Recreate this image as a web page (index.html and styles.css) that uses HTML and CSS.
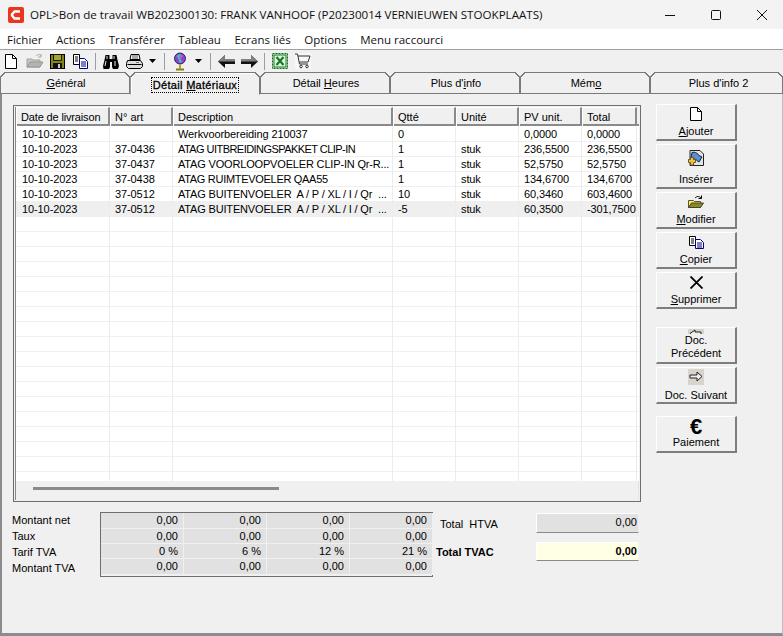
FILE: index.html
```html
<!DOCTYPE html>
<html lang="fr">
<head>
<meta charset="utf-8">
<title>OPL</title>
<link rel="stylesheet" href="styles.css">
</head>
<body>
<div class="window">
  <header class="titlebar">
    <svg class="logo" width="16" height="16" viewBox="0 0 16 16"><rect width="16" height="16" rx="2" fill="#e8361f"/><path d="M12 4.500H6.500L4 7.500v1L6.500 11.500H12" fill="none" stroke="#fff" stroke-width="2.400"/></svg>
    <span class="title">OPL&gt;Bon de travail WB202300130: FRANK VANHOOF (P20230014 VERNIEUWEN STOOKPLAATS)</span>
    <div class="winbtns">
      <svg width="10" height="10" viewBox="0 0 10 10"><path d="M0 5.500h10" stroke="#111" fill="none"/></svg>
      <svg width="10" height="10" viewBox="0 0 10 10"><rect x=".5" y=".5" width="9" height="9" rx="1" stroke="#111" fill="none"/></svg>
      <svg width="10" height="10" viewBox="0 0 10 10"><path d="M0 0l10 10M10 0L0 10" stroke="#111" fill="none"/></svg>
    </div>
  </header>
  <nav class="menubar">
    <span>Fichier</span><span>Actions</span><span>Transférer</span><span>Tableau</span><span>Ecrans liés</span><span>Options</span><span>Menu raccourci</span>
  </nav>
  <div class="toolbar">
    <svg class="t" width="12" height="15" viewBox="0 0 12 15"><path d="M.5.500h7l4 4v10H.5z" fill="#fff" stroke="#000"/><path d="M7.500.500v4h4" fill="none" stroke="#000"/></svg>
    <svg class="t t-open" width="18" height="16" viewBox="0 0 18 16"><path d="M1 6h5l1 1h7v7H1z" fill="#c8c8c4" stroke="#a0a09c"/><path d="M1 14l3-5h13l-3 5z" fill="#b4b4b0" stroke="#98988f"/><path d="M10 3c2-2 4-2 5 0M15 1v3h-3" fill="none" stroke="#a8a8a4"/></svg>
    <svg class="t t-save" width="15" height="15" viewBox="0 0 15 15"><rect x=".5" y=".5" width="14" height="14" fill="#84841a" stroke="#000"/><rect x="3.500" y=".5" width="8" height="6" fill="#a4a430" stroke="#000" stroke-width=".8"/><rect x="3" y="9" width="9" height="6" fill="#111"/><rect x="8" y="10" width="2" height="4" fill="#ccc"/></svg>
    <svg class="t t-copy" width="15" height="15" viewBox="0 0 15 15"><path d="M.5.500h6v10h-6z" fill="#fff" stroke="#000"/><path d="M2 3h3M2 5h3M2 7h3" stroke="#000"/><path d="M6.500 4.500h5l3 3v7h-8z" fill="#fff" stroke="#00007c"/><path d="M8 8h5M8 10h5M8 12h5" stroke="#00007c"/></svg>
    <i class="sep sep-a"></i>
    <svg class="t t-find" width="16" height="15" viewBox="0 0 16 15"><path d="M2.500 1h4v4h3V1h4l1 5 1.500 6-1 3H10L9 13V8H7v5l-1 2H.5l-.5-3 1.500-6z" fill="#000"/><path d="M3 7l-1 5M12 7v5M4 2v3M11 2v3" stroke="#fff" stroke-width=".9"/></svg>
    <svg class="t t-print" width="17" height="15" viewBox="0 0 17 15"><path d="M5 .5h8l1 5H4z" fill="#fff" stroke="#000"/><path d="M6 2h6M6 4h6" stroke="#555"/><path d="M1.500 6.500h13l2 3v3l-2 2h-12l-2-2v-3z" fill="#ddd" stroke="#000"/><path d="M1.500 10.500h14" stroke="#000"/><path d="M10 8.500h3" stroke="#777"/></svg>
    <svg class="t t-drop" width="7" height="4" viewBox="0 0 7 4"><path d="M0 0h7L3.500 4z" fill="#000"/></svg>
    <i class="sep sep-b"></i>
    <svg class="t t-globe" width="12" height="19" viewBox="0 0 12 19"><circle cx="6" cy="6.500" r="5.500" fill="#9c3cc8" stroke="#26266a"/><path d="M2.500 4l3-2 3 2-2 3 2 3-3 1-1-4z" fill="#38c0c8"/><path d="M5 4l3 1-1 3z" fill="#e040a0"/><path d="M6 12.500v4" stroke="#b8a010" stroke-width="2"/><path d="M2 17.500h8" stroke="#8a7a08" stroke-width="2"/></svg>
    <svg class="t t-drop2" width="7" height="4" viewBox="0 0 7 4"><path d="M0 0h7L3.500 4z" fill="#000"/></svg>
    <i class="sep sep-c"></i>
    <svg class="t t-left" width="17" height="13" viewBox="0 0 17 13"><path d="M7 0L0 6.500 7 13V9h10V4H7z" fill="#111"/><path d="M7 0L0 6.500h17V4H7z" fill="#808080"/></svg>
    <svg class="t t-right" width="17" height="13" viewBox="0 0 17 13"><path d="M10 0l7 6.500L10 13V9H0V4h10z" fill="#111"/><path d="M10 0l7 6.500H0V4h10z" fill="#808080"/></svg>
    <i class="sep sep-d"></i>
    <svg class="t t-xl" width="16" height="16" viewBox="0 0 16 16"><rect x=".5" y=".5" width="15" height="15" fill="#d8ecd4" stroke="#0c6b18" stroke-dasharray="2 1"/><rect x="2" y="2" width="12" height="12" fill="#e6f2e2" stroke="#157a22"/><path d="M4.500 4l7 8M11.500 4l-7 8" stroke="#157a22" stroke-width="2.200"/></svg>
    <svg class="t t-cart" width="16" height="16" viewBox="0 0 16 16"><rect width="16" height="16" fill="#f8f8f8"/><path d="M0 1h2.500l2 10h8.500M3 3h12l-2 6H4.500" fill="none" stroke="#333"/><circle cx="6" cy="13.500" r="1.300" fill="none" stroke="#333"/><circle cx="12" cy="13.500" r="1.300" fill="none" stroke="#333"/></svg>
  </div>
  <div class="tabs">
    <div class="tab"><span><u>G</u>énéral</span></div>
    <div class="tab active"><span class="focus">Détail <u>M</u>atériaux</span></div>
    <div class="tab"><span>Détail <u>H</u>eures</span></div>
    <div class="tab"><span>Plus d'<u>i</u>nfo</span></div>
    <div class="tab"><span>Mém<u>o</u></span></div>
    <div class="tab last"><span>Plus d'info 2</span></div>
  </div>
  <main class="panel">
    <div class="body-row">
      <section class="grid-frame">
        <div class="grid">
          <div class="row head">
            <div class="tight-h">Date de livraison</div><div>N° art</div><div>Description</div><div>Qtté</div><div>Unité</div><div>PV unit.</div><div>Total</div>
          </div>
          <div class="rows">
            <div class="row"><div>10-10-2023</div><div></div><div>Werkvoorbereiding 210037</div><div>0</div><div></div><div>0,0000</div><div>0,0000</div></div>
            <div class="row"><div>10-10-2023</div><div>37-0436</div><div class="s1">ATAG UITBREIDINGSPAKKET CLIP-IN</div><div>1</div><div>stuk</div><div>236,5500</div><div>236,5500</div></div>
            <div class="row"><div>10-10-2023</div><div>37-0437</div><div class="s3">ATAG VOORLOOPVOELER CLIP-IN Qr-R...</div><div>1</div><div>stuk</div><div>52,5750</div><div>52,5750</div></div>
            <div class="row"><div>10-10-2023</div><div>37-0438</div><div class="s2">ATAG RUIMTEVOELER QAA55</div><div>1</div><div>stuk</div><div>134,6700</div><div>134,6700</div></div>
            <div class="row"><div>10-10-2023</div><div>37-0512</div><div class="pre s3">ATAG BUITENVOELER  A / P / XL / I / Qr  ...</div><div>10</div><div>stuk</div><div>60,3460</div><div>603,4600</div></div>
            <div class="row sel"><div>10-10-2023</div><div>37-0512</div><div class="pre s3">ATAG BUITENVOELER  A / P / XL / I / Qr  ...</div><div>-5</div><div>stuk</div><div>60,3500</div><div>-301,7500</div></div>
            <div class="row blank"><div></div><div></div><div></div><div></div><div></div><div></div><div></div></div>
          </div>
          <div class="scrollzone"><div class="thumb"></div></div>
        </div>
      </section>
      <aside class="actions">
        <button class="btn b37"><svg width="12" height="14" viewBox="0 0 12 14"><path d="M.5.500h7l4 4v9H.5z" fill="#fff" stroke="#000"/><path d="M7.500.500v4h4" fill="none" stroke="#000"/></svg><span><u>A</u>jouter</span></button>
        <button class="btn b46"><svg class="ins" width="16" height="16" viewBox="0 0 16 16"><path d="M2 .5h10l3.500 3.500v11.500H2z" fill="#e4e4e4" stroke="#222"/><path d="M4 2.500c3-1 6 1 7 3l3 1.500-3 5c-2-1-3-3-5-3l-3-1z" fill="#5b8fd0" stroke="#123"/><path d="M3 9.500h2V7.500h3v2h2v3H8v2.500H5V12.500H3z" transform="translate(-2.500 0)" fill="#f4c430" stroke="#654"/></svg><span class="pad-t">Insérer</span></button>
        <button class="btn b37"><svg width="16" height="14" viewBox="0 0 16 14"><path d="M.5 5.500h5l1 1h6v6h-12z" fill="#ffe860" stroke="#554"/><path d="M.5 12.500l3-4.500h12l-3 4.500z" fill="#8a8a1e" stroke="#443"/><path d="M7 3c2-2 4-2 6 0M13.500 .5v3h-3" fill="none" stroke="#000"/></svg><span><u>M</u>odifier</span></button>
        <button class="btn b37"><svg class="top3" width="15" height="13" viewBox="0 0 15 13"><path d="M.5.500h6v9h-6z" fill="#fff" stroke="#000"/><path d="M2 3h3M2 5h3M2 7h3" stroke="#000"/><path d="M6.500 3.500h5l3 3v6h-8z" fill="#fff" stroke="#00007c"/><path d="M8 7h5M8 9h5M8 11h5" stroke="#00007c"/></svg><span><u>C</u>opier</span></button>
        <button class="btn b37"><svg class="top3" width="13" height="13" viewBox="0 0 13 13"><path d="M.5.500l12 12M12.500.500l-12 12" stroke="#000" stroke-width="1.800"/></svg><span><u>S</u>upprimer</span></button>
        <button class="btn b37 gap-l tight"><svg class="chip" width="16" height="16" viewBox="0 0 16 16"><rect width="16" height="16" fill="#d8d4cc"/><path d="M7 1L2 4.500 7 8V6h6V3H7z" fill="#eee" stroke="#222"/></svg><span class="over">Doc.<br>Précédent</span></button>
        <button class="btn b37"><svg class="chip" width="16" height="16" viewBox="0 0 16 16"><rect width="16" height="16" fill="#d8d4cc"/><path d="M9 3l5 4.500L9 12V9H2V6h7z" fill="#eee" stroke="#222"/></svg><span>Doc. Suivant</span></button>
        <button class="btn b37 gap-m"><span class="euro">€</span><span>Paiement</span></button>
      </aside>
    </div>
    <div class="totals">
      <div class="labels"><span>Montant net</span><span>Taux</span><span>Tarif TVA</span><span>Montant TVA</span></div>
      <div class="vat">
        <div>0,00</div><div>0,00</div><div>0,00</div><div>0,00</div>
        <div>0,00</div><div>0,00</div><div>0,00</div><div>0,00</div>
        <div>0 %</div><div>6 %</div><div>12 %</div><div>21 %</div>
        <div>0,00</div><div>0,00</div><div>0,00</div><div>0,00</div>
      </div>
      <div class="grand">
        <div class="g-row"><span class="g-label">Total&nbsp; HTVA</span><div class="g-val">0,00</div></div>
        <div class="g-row strong"><span class="g-label">Total TVAC</span><div class="g-val yellow">0,00</div></div>
      </div>
    </div>
  </main>
</div>
</body>
</html>
```
FILE: styles.css
```css
* { box-sizing: border-box; }
html, body { margin: 0; padding: 0; height: 100%; overflow: hidden; }
body { font: 11px/13px "Liberation Sans", Arial, sans-serif; color: #000; background: #f0f0f0; }
.window { width: 783px; height: 636px; display: flex; flex-direction: column; background: #f0f0f0; }

.titlebar { height: 29px; display: flex; align-items: center; padding-left: 8px; background: #f3f3f3; }
.logo { flex: none; }
.title { margin-left: 6px; font: 11.6px "Open Sans", sans-serif; color: #111; white-space: nowrap; }
.winbtns { margin-left: auto; display: flex; gap: 36px; padding-right: 16px; }
.winbtns svg { display: block; }

.menubar { height: 21px; flex: none; display: flex; gap: 13.5px; padding: 3px 0 0 7px; background: #fff; border-bottom: 1px solid #a0a0a0; font: 11.5px/15px "Open Sans", sans-serif; color: #111; }

.toolbar { height: 22px; flex: none; display: flex; align-items: center; padding-left: 5px; background: #f0f0f0; }
.t { flex: none; display: block; }
.t-open { margin-left: 9px; }
.t-save { margin-left: 6px; }
.t-copy { margin-left: 8px; }
.sep { flex: none; width: 1px; height: 17px; background: #9c9c9c; }
.sep-a { margin: 0 7px 0 7px; }
.t-print { margin-left: 7px; }
.t-drop { margin-left: 6px; }
.sep-b { margin: 0 9px 0 8px; }
.t-globe { margin-right: 2px; }
.t-drop2 { margin-left: 7px; }
.sep-c { margin: 0 7px 0 8px; }
.t-right { margin-left: 6px; }
.sep-d { margin: 0 7px 0 6px; }
.t-cart { margin-left: 7px; }

.tabs { height: 22px; flex: none; display: flex; background: #f0f0f0; position: relative; z-index: 1; }
.tab { flex: 0 0 130px; position: relative; display: flex; justify-content: center; padding: 4px 0 0 2px; background: #f0f0f0; border: 1px solid #7a7a7a; }
.tab::before, .tab::after { content: ""; position: absolute; top: -1px; width: 5px; height: 5px; }
.tab::before { left: -1px; background: linear-gradient(to bottom right, #f0f0f0 0 42%, #7a7a7a 42% 62%, #f0f0f0 62%); }
.tab::after { right: -1px; background: linear-gradient(to bottom left, #f0f0f0 0 42%, #7a7a7a 42% 62%, #f0f0f0 62%); }
.tab.last { flex-basis: 133px; padding-left: 4px; }
.tab u, .btn u { text-underline-offset: 1px; }
.tab.active { border-bottom-color: #f0f0f0; border-left-color: #9a9a9a; height: 23px; box-shadow: inset 1px 1px #fff; padding-left: 0; }
.focus { outline: 1px dotted #000; height: 14px; padding: 1px 1px 0; margin-top: 1px; letter-spacing: .3px; -webkit-text-stroke: .3px #000; }

.panel { flex: 1; display: flex; flex-direction: column; padding: 11px 0 0 11px; border-bottom: 3px solid #8c8c8c; border-left: 2px solid #8c8c8c; margin-top: -1px; border-top: 1px solid #7a7a7a; border-right: 1px solid #bdbdbd; }
.body-row { display: flex; height: 397px; }

.grid-frame { width: 628px; height: 397px; border: 1px solid #6e6e6e; padding: 1px; background: #f0f0f0; }
.grid { height: 100%; display: flex; flex-direction: column; border-left: 1px solid #8a8a8a; background: #f0f0f0; }
.row { display: grid; grid-template-columns: 94px 63px 220px 63px 63px 63px 55px; height: 15px; line-height: 15px; letter-spacing: -.1px; background: #fff; }
.row > div { padding-left: 5px; border-right: 1px solid #ececec; white-space: nowrap; overflow: hidden; }
.row > div:first-child { padding-left: 6px; }
.row > div:last-child { overflow: visible; }
.row .pre { white-space: pre; }
.row .s1 { letter-spacing: -.55px; }
.row .s2 { letter-spacing: -.3px; }
.row .s3 { letter-spacing: -.17px; }
.row.sel { background: #efefef; }
.row.blank { flex: 1; background-image: repeating-linear-gradient(to bottom, #fff 0 14px, #f0f0f0 14px 15px); }
.head { height: 19px; background: #f0f0f0; border-bottom: 2px solid #8a8a8a; letter-spacing: 0; }
.head > div { border-right: 2px solid #8a8a8a; border-left: 1px solid #fff; border-top: 1px solid #fff; line-height: 18px; padding-left: 4px; }
.head > div:first-child { padding-left: 4px; }
.head .tight-h { letter-spacing: -.15px; }
.rows { flex: 1; display: flex; flex-direction: column; background: #fff; padding-top: 1px; }
.rows .row:not(.blank) { border-bottom: 1px solid #efefef; }
.scrollzone { height: 19px; flex: none; padding: 6px 0 0 17px; background: #f0f0f0; border-right: 1px solid #e4e4e4; }
.thumb { width: 246px; height: 3px; background: #8a8a8a; }

.actions { width: 81px; margin: -1px 0 0 15px; display: flex; flex-direction: column; gap: 3px; }
.btn { width: 81px; padding: 0; flex: none; display: flex; flex-direction: column; align-items: center; justify-content: flex-start; font: 11px/13px "Liberation Sans", Arial, sans-serif; color: #000; background: #f0f0f0; border: 1px solid; border-color: #fff #7e7e7e #7e7e7e #fff; border-right-width: 2px; border-bottom-width: 2px; }
.btn svg { display: block; flex: none; margin-top: 2px; }
.btn svg.ins { margin-top: 5px; }
.btn svg.top3 { margin-top: 3px; }
.b46 { height: 45px; }
.b37 { height: 37px; }
.b37 span { margin-top: 4px; }
.b46 .pad-t { margin-top: 7px; }
.gap-l { margin-top: 15px; }
.gap-m { margin-top: 9px; }
.tight { position: relative; }
.btn .over { position: absolute; left: 2px; right: 2px; top: 6px; margin: 0; line-height: 13px; text-align: center; background: #f0f0f0; }
.btn .chip { margin-top: 1px; }
.btn .euro { margin: 0; font: 700 22px/19px "Liberation Sans", sans-serif; }
.gap-m span:last-child { margin-top: 0; }

.totals { display: flex; margin-top: 10px; margin-left: -1px; }
.labels { width: 88px; display: flex; flex-direction: column; line-height: 16px; margin-top: 0; }
.vat { width: 333px; height: 65px; display: grid; grid-template-columns: repeat(4, 83px); grid-template-rows: 16px 15px 15px 16px; border: 1px solid #6e6e6e; background: #f0f0f0; }
.vat > div { background: #e1e1e1; text-align: right; padding-right: 5px; line-height: 15px; border-right: 1px solid #f0f0f0; border-bottom: 1px solid #f0f0f0; }
.grand { flex: 1; padding: 1px 0 0 3px; display: flex; flex-direction: column; gap: 10px; }
.g-row { display: flex; align-items: center; height: 19px; }
.g-label { width: 100px; padding: 3px 0 0 4px; }
.g-row.strong .g-label { padding: 1px 0 0 0; font-weight: 700; }
.g-val { width: 103px; height: 20px; line-height: 17px; padding-right: 1px; text-align: right; background: #e1e1e1; border: 1px solid; border-color: #fff #f0f0f0 #8a8a8a #fff; }
.yellow { height: 19px; background: #ffffe4; font-weight: 700; }
```
